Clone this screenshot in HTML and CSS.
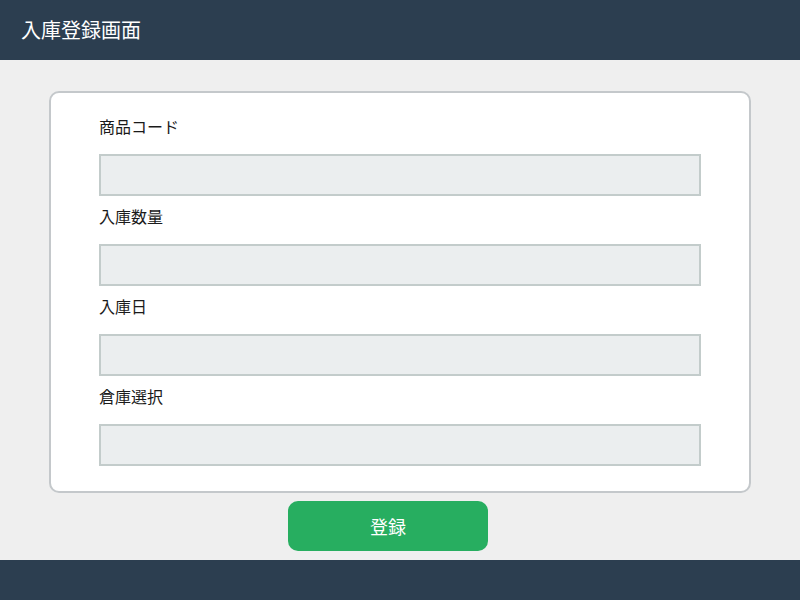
FILE: index.html
```html
<!DOCTYPE html>
<html lang="ja">
<head>
<meta charset="utf-8">
<link rel="stylesheet" href="styles.css">
<title>入庫登録画面</title>
</head>
<body>
<header class="header"><h1 class="title">入庫登録画面</h1></header>
<main class="main">
  <form class="card">
    <label class="label">商品コード</label>
    <input class="field" type="text">
    <label class="label">入庫数量</label>
    <input class="field" type="text">
    <label class="label">入庫日</label>
    <input class="field" type="text">
    <label class="label">倉庫選択</label>
    <input class="field" type="text">
  </form>
  <button class="submit" type="button">登録</button>
</main>
<footer class="footer"></footer>
</body>
</html>
```
FILE: styles.css
```css
* { box-sizing: border-box; }
html, body { margin: 0; padding: 0; }
body {
  width: 800px;
  height: 600px;
  background: #efefef;
  font-family: "Noto Sans CJK JP", "Noto Sans", sans-serif;
  display: flex;
  flex-direction: column;
}
.header {
  height: 60px;
  background: #2c3e50;
  display: flex;
  align-items: center;
  padding-left: 21px;
  flex-shrink: 0;
}
.title {
  margin: 0;
  color: #ffffff;
  font-size: 20px;
  font-weight: 400;
  line-height: 1;
}
.main {
  flex: 1;
  display: flex;
  flex-direction: column;
  align-items: center;
  padding-top: 31px;
}
.card {
  width: 702px;
  background: #ffffff;
  border: 2px solid #c4c8cb;
  border-radius: 10px;
  padding: 23px 48px 15px;
  display: flex;
  flex-direction: column;
}
.label {
  display: block;
  font-size: 16px;
  line-height: 21px;
  height: 24px;
  color: #1a1a1a;
  margin-bottom: 14px;
}
.field {
  display: block;
  width: 602px;
  height: 42px;
  margin: 0 0 10px;
  background: #ebeeef;
  border: 2px solid #c3cccb;
  border-radius: 0;
  padding: 0 8px;
  font-family: inherit;
  font-size: 16px;
}
.submit {
  margin-top: 8px;
  margin-right: 24px;
  width: 200px;
  height: 50px;
  background: #27ae60;
  color: #ffffff;
  border: none;
  border-radius: 10px;
  font-family: inherit;
  font-size: 18px;
  padding: 0;
}
.footer {
  height: 40px;
  background: #2c3e50;
  flex-shrink: 0;
}
```
